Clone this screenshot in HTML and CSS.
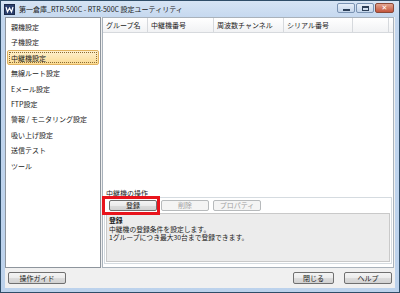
FILE: index.html
```html
<!DOCTYPE html>
<html lang="ja">
<head>
    <meta charset="UTF-8">
    <title>RTR-500C 設定ユーティリティ</title>
    <link rel="stylesheet" href="styles.css">
</head>
<body>

<div class="window">
    <div class="titlebar">
        <svg class="app-icon" width="11" height="11" viewBox="0 0 11 11">
            <rect x="0.5" y="0.5" width="10" height="10" fill="#2b3f6e" stroke="#1b2a4a"/>
            <path d="M2 3 L3.5 8 L5.5 4 L7.5 8 L9 3" fill="none" stroke="#fff" stroke-width="1.2"/>
        </svg>
        <span class="title">第一倉庫_RTR-500C - RTR-500C 設定ユーティリティ</span>
        <div class="controls">
            <div class="ctl"><span class="ico-min"></span></div>
            <div class="ctl"><span class="ico-max"></span></div>
            <div class="ctl close"><span class="ico-x">✕</span></div>
        </div>
    </div>

    <div class="client">
        <div class="main">
            <ul class="menu">
                <li>親機設定</li>
                <li>子機設定</li>
                <li class="selected">中継機設定</li>
                <li>無線ルート設定</li>
                <li>Eメール設定</li>
                <li>FTP設定</li>
                <li>警報 / モニタリング設定</li>
                <li>吸い上げ設定</li>
                <li>送信テスト</li>
                <li>ツール</li>
            </ul>

            <div class="content">
                <div class="lv-header">
                    <div class="col col-group">グループ名</div>
                    <div class="col col-num">中継機番号</div>
                    <div class="col col-freq">周波数チャンネル</div>
                    <div class="col col-serial">シリアル番号</div>
                    <div class="col col-rest"></div>
                </div>
                <div class="lv-body"></div>

                <div class="ops">
                    <div class="ops-label">中継機の操作</div>
                    <div class="ops-box">
                        <div class="ops-buttons">
                            <button class="btn">登録</button>
                            <button class="btn" disabled>削除</button>
                            <button class="btn" disabled>プロパティ</button>
                            <div class="mark"></div>
                        </div>
                        <div class="desc">
                            <div class="desc-title">登録</div>
                            <div>中継機の登録条件を設定します。</div>
                            <div>1グループにつき最大30台まで登録できます。</div>
                        </div>
                    </div>
                </div>
            </div>
        </div>

        <div class="footer">
            <button class="btn btn-guide">操作ガイド</button>
            <div class="spacer"></div>
            <button class="btn btn-close">閉じる</button>
            <button class="btn btn-help">ヘルプ</button>
        </div>
    </div>
</div>

</body>
</html>
```

FILE: styles.css
```css
* {
    box-sizing: border-box;
}
body {
    margin: 0;
    font-family: "Noto Sans CJK JP", "Noto Sans", sans-serif;
    font-size: 7px;
    color: #1a1a1a;
    background: #ffffff;
}
.window {
    width: 400px;
    height: 293px;
    border: 1px solid #2f4d68;
    background: linear-gradient(#d6e4f4, #c2d6ee 20px, #bcd2ec);
    padding: 0 4px 4px 4px;
    display: flex;
    flex-direction: column;
}
.titlebar {
    height: 16px;
    display: flex;
    align-items: center;
    position: relative;
}
.app-icon {
    margin-left: -1px;
    margin-right: 4px;
}
.title {
    font-size: 7px;
    color: #1b1b1b;
    white-space: nowrap;
}
.controls {
    margin-left: auto;
    margin-right: 1px;
    display: flex;
    gap: 1px;
    align-self: flex-start;
    margin-top: 2px;
}
.ctl {
    width: 18px;
    height: 10px;
    border: 1px solid #7a93b3;
    border-radius: 2px;
    background: linear-gradient(#e7eff9, #c4d5ea);
    display: flex;
    align-items: center;
    justify-content: center;
}
.ctl.close {
    width: 19px;
    border-color: #8a4a3a;
    background: linear-gradient(#e3a48e, #c4553c);
}
.ico-min {
    width: 7px;
    height: 2px;
    background: #2c3f58;
    margin-top: 4px;
}
.ico-max {
    width: 7px;
    height: 5px;
    border: 1px solid #2c3f58;
    border-top-width: 2px;
}
.ico-x {
    color: #ffffff;
    font-size: 7px;
    line-height: 1;
    font-family: "DejaVu Sans", sans-serif;
    font-weight: bold;
}
.client {
    flex: 1;
    background: #f0f0f0;
    display: flex;
    flex-direction: column;
}
.main {
    height: 251px;
    display: flex;
}
.menu {
    list-style: none;
    margin: 0;
    padding: 1px 0 0 0;
    width: 96px;
    background: #ffffff;
    border: 1px solid #8e959d;
}
.menu li {
    height: 15.4px;
    line-height: 14px;
    padding-left: 3px;
    margin: 0 1px;
    white-space: nowrap;
    border: 1px solid transparent;
}
.menu li.selected {
    background: linear-gradient(#fdf0cf, #fbdc94);
    border: 1px solid #e2b35f;
    border-radius: 2px;
    outline: 1px dotted #8a6a30;
    outline-offset: -3px;
}
.content {
    flex: 1;
    margin-left: 1px;
    margin-right: 1px;
    background: #ffffff;
    border: 1px solid #a9b2bb;
    display: flex;
    flex-direction: column;
}
.lv-header {
    height: 15px;
    display: flex;
    background: linear-gradient(#ffffff, #f1f2f4);
    border-bottom: 1px solid #d6d9dd;
}
.col {
    line-height: 14px;
    padding-left: 3px;
    border-right: 1px solid #d6d9dd;
    white-space: nowrap;
    color: #222;
}
.col-group { width: 45px; }
.col-num { width: 66px; }
.col-freq { width: 70px; }
.col-serial { width: 69px; }
.col-rest { width: 36px; }
.lv-body {
    flex: 1;
}
.ops {
    padding: 0 1px 3px 1px;
}
.ops-label {
    padding-left: 2px;
    line-height: 8px;
    height: 8px;
}
.ops-box {
    border: 1px solid #d5dbe0;
    padding: 2px 1px 1px 1px;
}
.ops-buttons {
    display: flex;
    gap: 4px;
    padding-left: 3px;
    margin-bottom: 2px;
    position: relative;
}
.btn {
    font-family: "Noto Sans CJK JP", "Noto Sans", sans-serif;
    font-size: 7px;
    color: #1a1a1a;
    width: 48px;
    height: 11px;
    padding: 0;
    line-height: 9px;
    border: 1px solid #707070;
    border-radius: 2px;
    background: linear-gradient(#f4f4f4 0%, #ebebeb 50%, #dcdcdc 51%, #d2d2d2 100%);
}
.btn:disabled {
    color: #a0a0a0;
    border-color: #b7babc;
    background: #f4f4f4;
}
.mark {
    position: absolute;
    left: -4px;
    top: -4px;
    width: 58px;
    height: 19px;
    border: 3px solid #e8141c;
}
.desc {
    height: 49px;
    background: #ececec;
    border: 1px solid #c9c9c9;
    padding: 2px 2px;
    font-size: 6.8px;
    line-height: 8.6px;
}
.desc-title {
    font-weight: bold;
}
.footer {
    flex: 1;
    display: flex;
    align-items: center;
    padding: 0 3px 0 3px;
}
.spacer {
    flex: 1;
}
.btn-guide {
    width: 58px;
    height: 12px;
}
.btn-close {
    width: 41px;
    height: 12px;
    margin-right: 10px;
}
.btn-help {
    width: 48px;
    height: 12px;
}
```
